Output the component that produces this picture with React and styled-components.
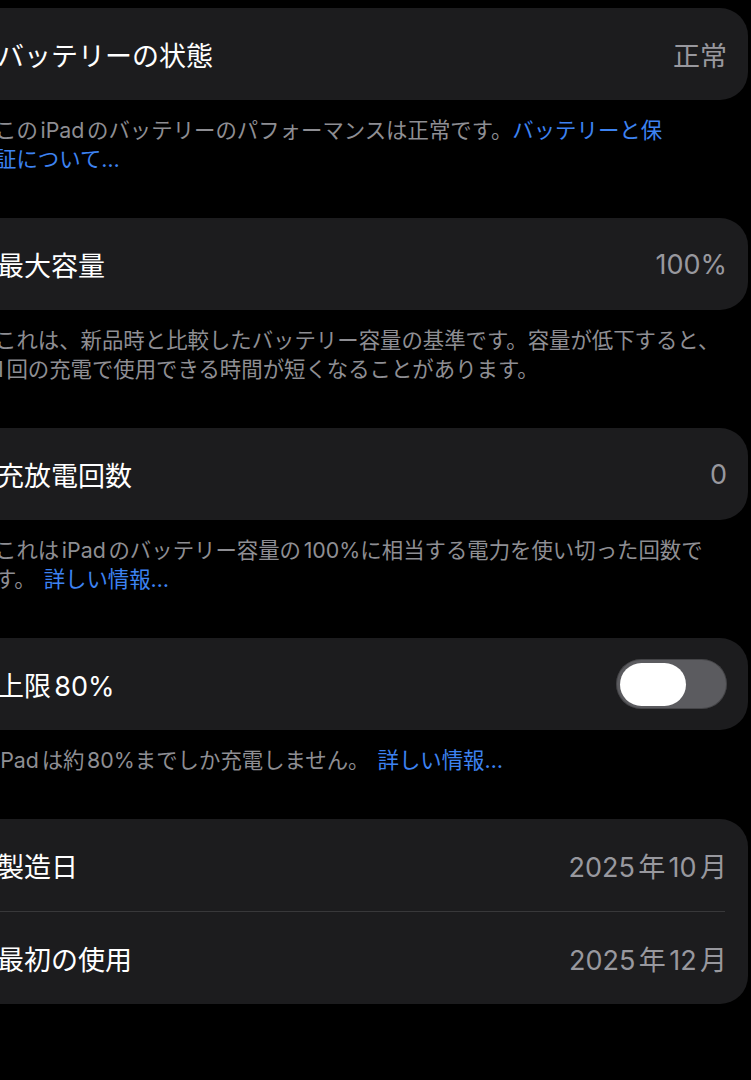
import React, { useState } from "react";
import styled, { createGlobalStyle } from "styled-components";

const GlobalStyle = createGlobalStyle`
  html, body {
    margin: 0;
    background: #000;
  }
  body {
    font-family: "Inter", "Noto Sans CJK JP", "Noto Sans", sans-serif;
    -webkit-font-smoothing: antialiased;
  }
`;

const Page = styled.div`
  background: #000;
  min-height: 1080px;
  margin-left: -30px;
  padding: 8px 3px 0 0;
  overflow: hidden;
`;

const Section = styled.section`
  margin-bottom: 44px;
`;

const Card = styled.div`
  background: #1c1c1e;
  border-radius: 28px;
  overflow: hidden;
`;

const Row = styled.div`
  display: flex;
  align-items: center;
  justify-content: space-between;
  height: 92px;
  padding: 0 21px 0 27px;
`;

const Label = styled.span`
  font-size: 27px;
  color: #ffffff;
  text-autospace: normal;
`;

const Value = styled.span`
  font-size: 27px;
  color: #98989e;
  text-autospace: normal;
`;

const Divider = styled.div`
  height: 1px;
  background: #38383a;
  margin: 0 23px 0 27px;
`;

const Footer = styled.p`
  margin: 0;
  padding: 16px 20px 0 25px;
  font-size: 21.4px;
  line-height: 29px;
  color: #8e8e93;
  white-space: nowrap;
  text-autospace: normal;
`;

const Link = styled.span`
  color: #3d83f2;
  margin-left: ${({ $gap }) => ($gap ? "8px" : "0")};
`;

const Track = styled.button`
  display: flex;
  align-items: center;
  justify-content: ${({ $on }) => ($on ? "flex-end" : "flex-start")};
  width: 111px;
  height: 50px;
  margin-right: 0;
  padding: 0 4px;
  border: none;
  border-radius: 25px;
  background: ${({ $on }) => ($on ? "#30d158" : "#5b5b5f")};
  box-shadow: inset 0 0 0 1px rgba(0, 0, 0, 0.25);
  cursor: pointer;
`;

const Knob = styled.span`
  width: 66px;
  height: 43px;
  border-radius: 22px;
  background: #ffffff;
`;

const Toggle = () => {
  const [on, setOn] = useState(false);
  return (
    <Track $on={on} onClick={() => setOn(!on)} aria-pressed={on}>
      <Knob />
    </Track>
  );
};

const App = () => {
  return (
    <>
      <GlobalStyle />
      <Page>
        <Section>
          <Card>
            <Row>
              <Label>バッテリーの状態</Label>
              <Value>正常</Value>
            </Row>
          </Card>
          <Footer>
            このiPadのバッテリーのパフォーマンスは正常です。<Link>バッテリーと保</Link>
            <br />
            <Link>証について…</Link>
          </Footer>
        </Section>

        <Section>
          <Card>
            <Row>
              <Label>最大容量</Label>
              <Value>100%</Value>
            </Row>
          </Card>
          <Footer>
            これは、新品時と比較したバッテリー容量の基準です。容量が低下すると、
            <br />
            1回の充電で使用できる時間が短くなることがあります。
          </Footer>
        </Section>

        <Section>
          <Card>
            <Row>
              <Label>充放電回数</Label>
              <Value>0</Value>
            </Row>
          </Card>
          <Footer>
            これはiPadのバッテリー容量の100%に相当する電力を使い切った回数で
            <br />
            す。<Link $gap>詳しい情報…</Link>
          </Footer>
        </Section>

        <Section>
          <Card>
            <Row>
              <Label>上限80%</Label>
              <Toggle />
            </Row>
          </Card>
          <Footer>
            iPadは約80%までしか充電しません。<Link $gap>詳しい情報…</Link>
          </Footer>
        </Section>

        <Section>
          <Card>
            <Row>
              <Label>製造日</Label>
              <Value>2025年10月</Value>
            </Row>
            <Divider />
            <Row>
              <Label>最初の使用</Label>
              <Value>2025年12月</Value>
            </Row>
          </Card>
        </Section>
      </Page>
    </>
  );
};

export default App;
